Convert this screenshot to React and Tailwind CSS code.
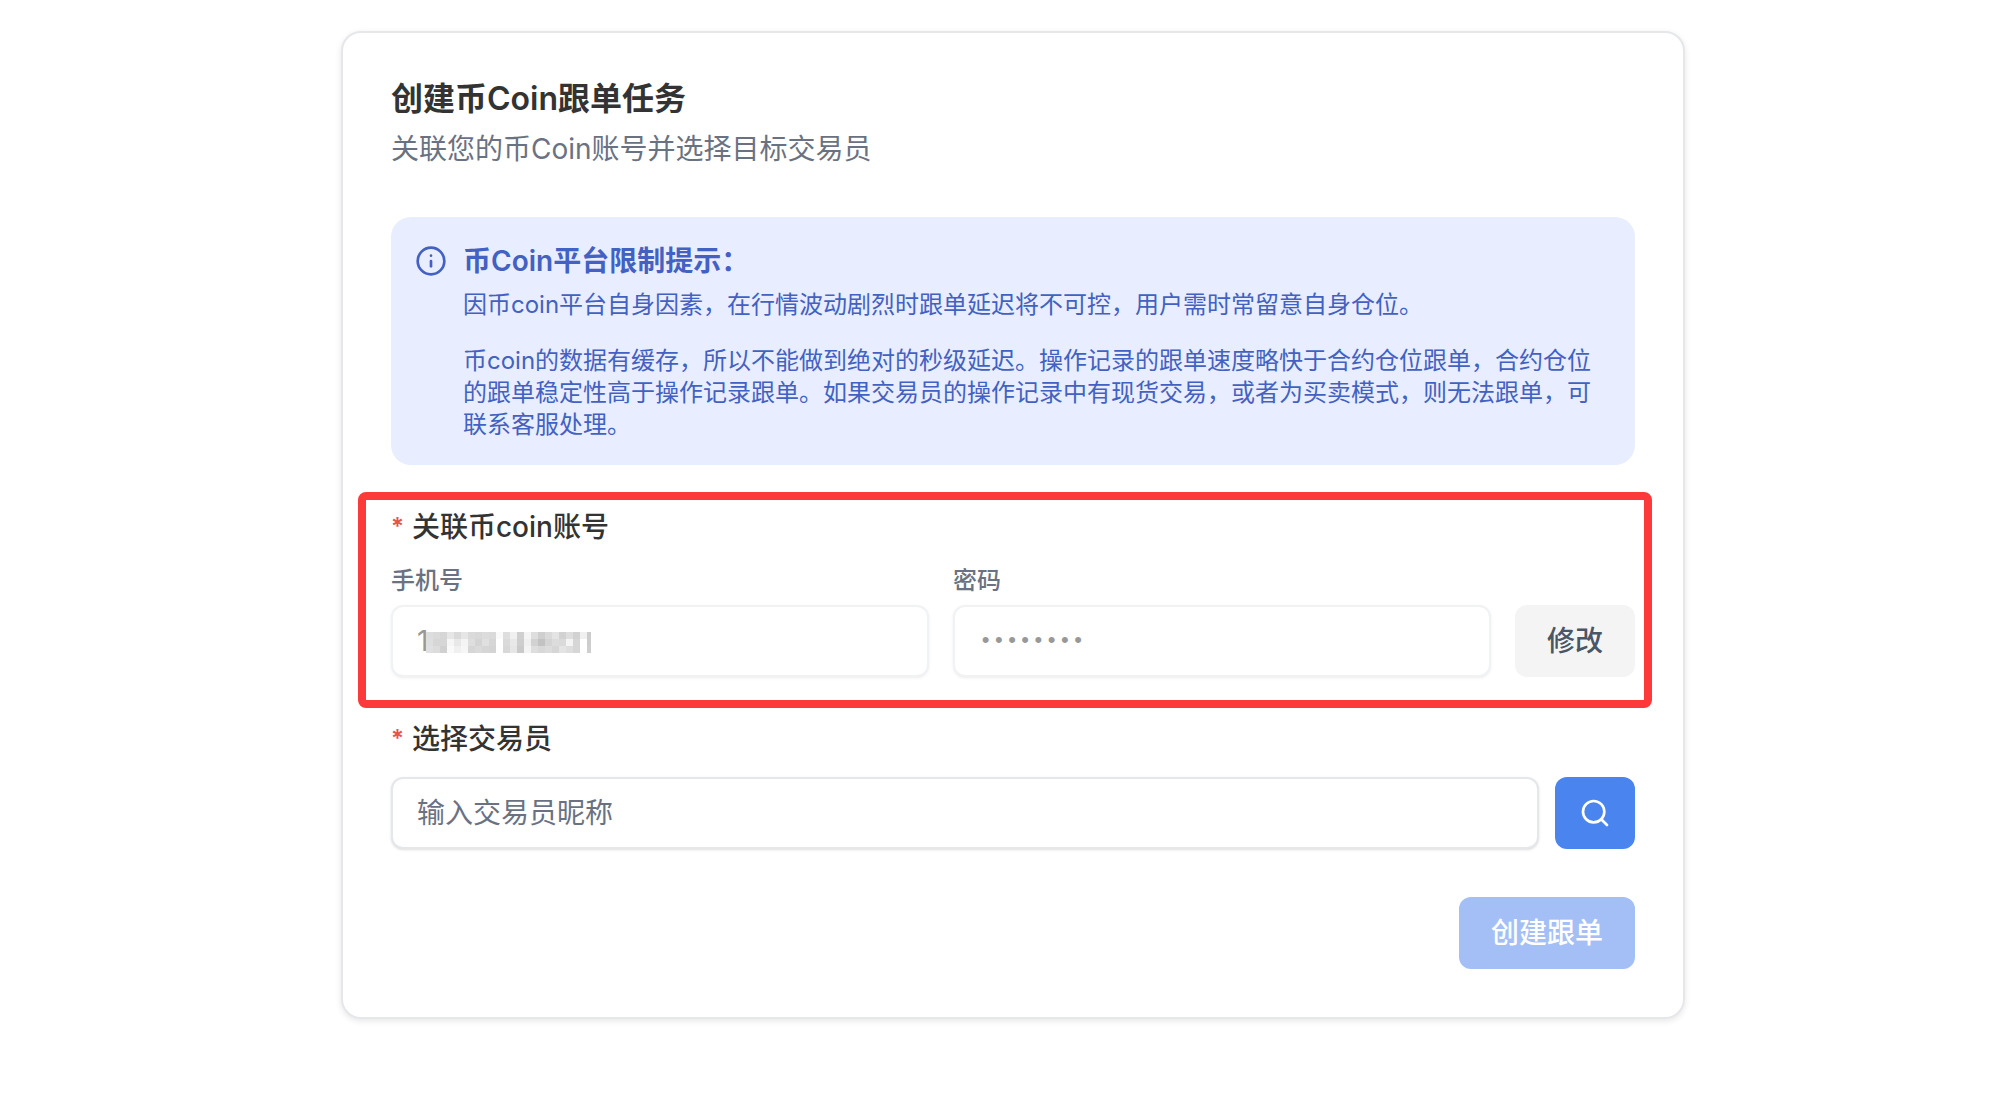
import React, { useState } from "react";
import { Info, Search } from "lucide-react";

// grey levels of the mosaic that hides the phone number, row by row
const MOSAIC = [
  "#dddddd #dadada #d6d6d6 #e6e6e6 #dadada #e6e6e6 #dadada #d8d8d8 #dcdcdc #dadada #fafafa #dedede #f0f0f0 #cfcfcf #f4f4f4 #dedede #cfcfcf #dadada #e4e4e4 #d2d2d2 #dedede #d2d2d2 #f0f0f0 #cdcdcd",
  "#dedede #d6d6d6 #d6d6d6 #f6f6f6 #e8e8e8 #f4f4f4 #dedede #d4d4d4 #e0e0e0 #d6d6d6 #ffffff #dadada #e8e8e8 #cecece #f0f0f0 #d2d2d2 #c2c2c2 #d4d4d4 #dcdcdc #dadada #f4f4f4 #d6d6d6 #ffffff #cdcdcd",
  "#e0e0e0 #dcdcdc #d0d0d0 #fafafa #f0f0f0 #f6f6f6 #d6d6d6 #dadada #d6d6d6 #d4d4d4 #ffffff #d8d8d8 #e6e6e6 #cacaca #f4f4f4 #dedede #d8d8d8 #dcdcdc #d6d6d6 #e4e4e4 #dedede #d6d6d6 #ffffff #cfcfcf",
].map((row) => row.split(" "));

const inputStyle =
  "h-[72px] w-full min-w-0 rounded-xl border-2 border-gray-200 bg-white px-6 leading-10 text-[#333333] shadow-sm outline-none placeholder:text-gray-500";
const labelStyle =
  "flex items-center gap-2 text-[28px] leading-7 font-medium text-[#333333]";
const subLabelStyle = "block text-2xl leading-8 font-medium text-gray-500";

const Required = () => (
  <span className="text-2xl leading-7 font-semibold text-[#e5534b]">*</span>
);

const Mosaic = () => (
  <svg
    viewBox="0 0 165 21"
    shapeRendering="crispEdges"
    aria-hidden="true"
    className="pointer-events-none absolute bottom-6 left-[35px] h-[21px] w-[165px]"
  >
    {MOSAIC.map((row, y) =>
      row.map((fill, x) => (
        <rect
          key={`${x}-${y}`}
          x={x * 7}
          y={y * 7}
          width="7"
          height="7"
          fill={fill}
        />
      ))
    )}
  </svg>
);

const App = () => {
  const [phone, setPhone] = useState("1");
  const [password, setPassword] = useState("12345678");
  const [trader, setTrader] = useState("");

  return (
    <main className="min-h-screen bg-white pt-[31px] pr-4 pb-8 pl-9 font-['Inter','Noto_Sans_CJK_SC',sans-serif]">
      <form
        className="mx-auto flex max-w-[1344px] flex-col gap-12 rounded-[20px] border-2 border-gray-200 bg-white p-12 shadow-[0_2px_6px_rgba(0,0,0,0.1)]"
        onSubmit={(e) => e.preventDefault()}
      >
        <header className="flex flex-col gap-3">
          <h1 className="text-[32px] leading-9 font-semibold text-[#333333]">
            创建币Coin跟单任务
          </h1>
          <p className="text-[28px] leading-10 text-gray-500">
            关联您的币Coin账号并选择目标交易员
          </p>
        </header>

        <section className="flex gap-4 rounded-[20px] bg-[#e8eeff] p-6 text-[#4361c2]">
          <Info size={32} className="mt-1 shrink-0" />
          <div className="min-w-0 flex-1">
            <h2 className="mb-2 text-[28px] leading-10 font-semibold">
              币Coin平台限制提示：
            </h2>
            <p className="mb-6 text-2xl leading-8">
              因币coin平台自身因素，在行情波动剧烈时跟单延迟将不可控，用户需时常留意自身仓位。
            </p>
            <p className="text-2xl leading-8">
              币coin的数据有缓存，所以不能做到绝对的秒级延迟。操作记录的跟单速度略快于合约仓位跟单，合约仓位的跟单稳定性高于操作记录跟单。如果交易员的操作记录中有现货交易，或者为买卖模式，则无法跟单，可联系客服处理。
            </p>
          </div>
        </section>

        <div
          role="group"
          aria-labelledby="account"
          className="relative flex flex-col gap-6"
        >
          <div id="account" className={labelStyle}>
            <Required />
            关联币coin账号
          </div>
          <div className="flex items-end gap-6">
            <div className="relative flex flex-1 flex-col gap-2">
              <label htmlFor="phone" className={subLabelStyle}>
                手机号
              </label>
              <input
                id="phone"
                className={inputStyle + " text-[28px] opacity-50"}
                value={phone}
                onChange={(e) => setPhone(e.target.value)}
                disabled
              />
              <Mosaic />
            </div>
            <div className="flex flex-1 flex-col gap-2">
              <label htmlFor="password" className={subLabelStyle}>
                密码
              </label>
              <input
                id="password"
                type="password"
                className={
                  inputStyle + " font-['Liberation_Mono',monospace] text-[22px] opacity-50"
                }
                value={password}
                onChange={(e) => setPassword(e.target.value)}
                disabled
              />
            </div>
            <button
              type="button"
              className="h-[72px] rounded-xl bg-[#f4f4f5] px-8 text-[28px] font-medium text-gray-600"
            >
              修改
            </button>
          </div>
          {/* highlight frame around the account block */}
          <div className="pointer-events-none absolute -top-[21px] -right-[17px] -bottom-[31px] -left-[33px] rounded-lg border-8 border-[#fd3a3a]" />
        </div>

        <div className="flex flex-col gap-6">
          <label htmlFor="trader" className={labelStyle}>
            <Required />
            选择交易员
          </label>
          <div className="flex gap-4">
            <input
              id="trader"
              className={inputStyle + " text-[28px]"}
              placeholder="输入交易员昵称"
              value={trader}
              onChange={(e) => setTrader(e.target.value)}
            />
            <button
              type="button"
              aria-label="搜索"
              className="flex h-[72px] w-20 shrink-0 items-center justify-center rounded-xl bg-[#4a84ef] text-white"
            >
              <Search size={32} />
            </button>
          </div>
        </div>

        <div className="flex justify-end">
          <button
            type="submit"
            disabled
            className="h-[72px] rounded-xl bg-[#4a80ef] px-8 text-[28px] font-medium text-white opacity-50"
          >
            创建跟单
          </button>
        </div>
      </form>
    </main>
  );
};

export default App;
